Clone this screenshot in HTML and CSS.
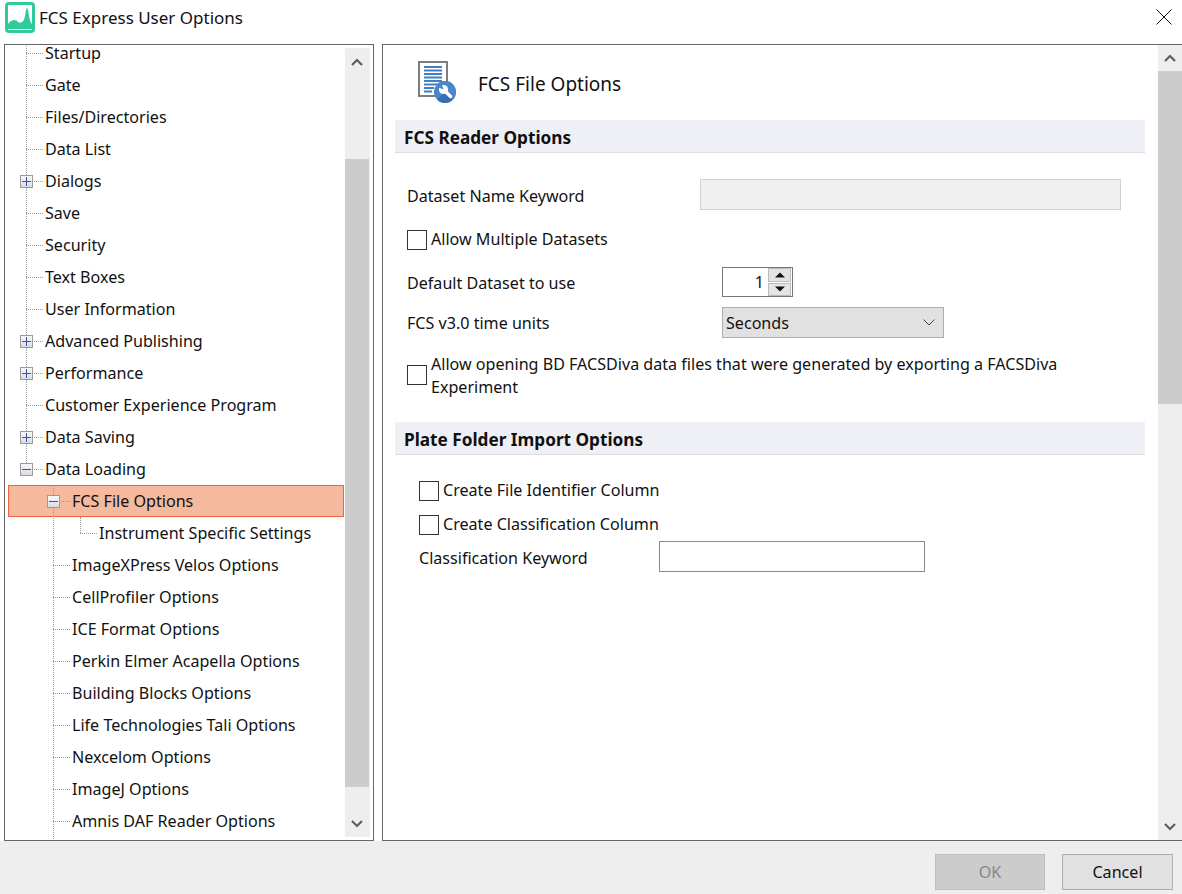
FILE: index.html
```html
<!DOCTYPE html>
<html lang="en">
<head>
<meta charset="utf-8">
<title>FCS Express User Options</title>
<link rel="stylesheet" href="styles.css">
</head>
<body>
<div class="window">
  <header class="titlebar">
    <svg class="app-icon" viewBox="0 0 30 31" width="30" height="31" aria-hidden="true">
      <rect x="1.5" y="1.5" width="27" height="28" rx="2.5" fill="#fff" stroke="#2fcb9b" stroke-width="3"/>
      <path d="M3 27V22Q6 18 9 18Q12 18 13 20Q15 21 17 20Q19 19 20 14Q21 6 22 6Q23 6 24 14Q25 20 27 22V27Z" fill="#2fcb9b"/>
    </svg>
    <span class="title-text">FCS Express User Options</span>
    <svg class="close-icon" viewBox="0 0 16 16" width="16" height="16" aria-hidden="true">
      <path d="M.5.5L15.5 15.5M15.5.5L.5 15.5" stroke="#111" stroke-width="1" fill="none"/>
    </svg>
  </header>

  <main class="panes">
    <nav class="tree-pane">
      <div class="tree">
        <span class="vline vline-0"></span>
        <span class="vline vline-1"></span>
        <span class="vline vline-2"></span>
        <div class="row l0">Startup</div>
        <div class="row l0">Gate</div>
        <div class="row l0">Files/Directories</div>
        <div class="row l0">Data List</div>
        <div class="row l0 has-box"><i class="box plus"></i>Dialogs</div>
        <div class="row l0">Save</div>
        <div class="row l0">Security</div>
        <div class="row l0">Text Boxes</div>
        <div class="row l0">User Information</div>
        <div class="row l0 has-box"><i class="box plus"></i>Advanced Publishing</div>
        <div class="row l0 has-box"><i class="box plus"></i>Performance</div>
        <div class="row l0">Customer Experience Program</div>
        <div class="row l0 has-box"><i class="box plus"></i>Data Saving</div>
        <div class="row l0 has-box"><i class="box"></i>Data Loading</div>
        <div class="row l1 has-box selected"><i class="box"></i>FCS File Options</div>
        <div class="row l2">Instrument Specific Settings</div>
        <div class="row l1">ImageXPress Velos Options</div>
        <div class="row l1">CellProfiler Options</div>
        <div class="row l1">ICE Format Options</div>
        <div class="row l1">Perkin Elmer Acapella Options</div>
        <div class="row l1">Building Blocks Options</div>
        <div class="row l1">Life Technologies Tali Options</div>
        <div class="row l1">Nexcelom Options</div>
        <div class="row l1">ImageJ Options</div>
        <div class="row l1">Amnis DAF Reader Options</div>
      </div>
      <div class="scrollbar left-scroll">
        <div class="sb-btn">
          <svg viewBox="0 0 12 8" width="12" height="8" aria-hidden="true"><path d="M1 7L6 2L11 7" fill="none" stroke="#5f5f5f" stroke-width="2.2"/></svg>
        </div>
        <div class="sb-thumb"></div>
        <div class="sb-btn">
          <svg viewBox="0 0 12 8" width="12" height="8" aria-hidden="true"><path d="M1 1L6 6L11 1" fill="none" stroke="#5f5f5f" stroke-width="2.2"/></svg>
        </div>
      </div>
    </nav>

    <section class="content-pane">
      <div class="content">
        <div class="page-head">
          <svg class="page-icon" viewBox="0 0 38 42" width="38" height="42" aria-hidden="true">
            <rect x="1" y="1" width="28" height="34" fill="#fff" stroke="#7d7d7d" stroke-width="2"/>
            <path d="M6 6H24M6 9.500H24M6 13H24M6 16.500H24M6 20H24M6 23.500H22M6 27H16M6 30.500H14" stroke="#3f7fc6" stroke-width="2"/>
            <circle cx="27" cy="31" r="11" fill="#4a86c8"/>
            <path d="M19.200 23.200A11 11 0 0 1 34.800 38.800Z" fill="#4a86c8"/>
            <path d="M19.200 38.800A11 11 0 0 0 34.800 38.800L27 31Z" fill="#346fb3"/>
            <path d="M26 29L32.500 35.500" stroke="#fff" stroke-width="3.400" stroke-linecap="round"/>
            <circle cx="25.500" cy="28.500" r="4.600" fill="#fff"/>
            <path d="M25.500 28.500L20.500 26.500L23.500 22.500Z" fill="#4a86c8"/>
          </svg>
          <h1>FCS File Options</h1>
        </div>

        <h2 class="band">FCS Reader Options</h2>
        <div class="reader-group">
          <div class="form-row dataset-name">
            <label class="field-label">Dataset Name Keyword</label>
            <div class="text-input disabled wide"></div>
          </div>
          <label class="check-row allow-multi"><i class="check"></i><span>Allow Multiple Datasets</span></label>
          <div class="form-row dataset-default">
            <label class="field-label">Default Dataset to use</label>
            <div class="spinner">
              <span class="spin-val">1</span>
              <span class="spin-btns">
                <span class="spin-btn"><svg viewBox="0 0 10 6" width="10" height="6" aria-hidden="true"><path d="M0 5.500L5 .5L10 5.500Z" fill="#111"/></svg></span>
                <span class="spin-btn"><svg viewBox="0 0 10 6" width="10" height="6" aria-hidden="true"><path d="M0 .5L5 5.500L10 .5Z" fill="#111"/></svg></span>
              </span>
            </div>
          </div>
          <div class="form-row units">
            <label class="field-label">FCS v3.0 time units</label>
            <div class="select"><span>Seconds</span>
              <svg viewBox="0 0 12 7" width="12" height="7" aria-hidden="true"><path d="M.5 .5L6 6L11.500 .5" fill="none" stroke="#444" stroke-width="1"/></svg>
            </div>
          </div>
          <label class="check-row diva"><i class="check"></i><span>Allow opening BD FACSDiva data files that were generated by exporting a FACSDiva Experiment</span></label>
        </div>

        <h2 class="band">Plate Folder Import Options</h2>
        <div class="plate-group">
          <label class="check-row"><i class="check"></i><span>Create File Identifier Column</span></label>
          <label class="check-row"><i class="check"></i><span>Create Classification Column</span></label>
          <div class="form-row keyword">
            <label class="field-label short">Classification Keyword</label>
            <div class="text-input key-input"></div>
          </div>
        </div>
      </div>
      <div class="scrollbar right-scroll">
        <div class="sb-btn">
          <svg viewBox="0 0 12 8" width="12" height="8" aria-hidden="true"><path d="M1 7L6 2L11 7" fill="none" stroke="#5f5f5f" stroke-width="2.2"/></svg>
        </div>
        <div class="sb-thumb"></div>
        <div class="sb-rest"></div>
        <div class="sb-btn">
          <svg viewBox="0 0 12 8" width="12" height="8" aria-hidden="true"><path d="M1 1L6 6L11 1" fill="none" stroke="#5f5f5f" stroke-width="2.2"/></svg>
        </div>
      </div>
    </section>
  </main>

  <footer class="footer">
    <button class="btn ok" disabled>OK</button>
    <button class="btn cancel">Cancel</button>
  </footer>
</div>
</body>
</html>
```
FILE: styles.css
```css
* { box-sizing: border-box; }
html, body { margin: 0; padding: 0; }
body {
  width: 1182px;
  height: 894px;
  overflow: hidden;
  background: #fff;
  color: #111;
  font-family: "Noto Sans", "Open Sans", sans-serif;
  font-size: 16.1px;
}
.window { display: flex; flex-direction: column; height: 894px; }

.titlebar {
  flex: 0 0 44px;
  display: flex;
  align-items: flex-start;
  padding: 2px 10px 0 5px;
  background: #fff;
}
.app-icon { flex: none; margin-right: 4px; }
.title-text { font-size: 17px; flex: 1; line-height: 32px; }
.close-icon { flex: none; margin-top: 7px; }

.panes { flex: 0 0 797px; display: flex; padding-left: 4px; gap: 8px; }

.tree-pane {
  width: 370px;
  border: 1px solid #666;
  display: flex;
  position: relative;
  overflow: hidden;
  background: #fff;
}
.tree {
  position: relative;
  flex: 0 0 340px;
  margin-top: -8px;
  overflow: visible;
}
.row {
  height: 32px;
  display: flex;
  align-items: center;
  position: relative;
  white-space: nowrap;
}
.row::before {
  content: "";
  position: absolute;
  top: 16px;
  height: 0;
  border-top: 1px dotted #999;
}
.l0 { padding-left: 40px; }
.l0::before { left: 21px; width: 17px; }
.l1 { padding-left: 67px; }
.l1::before { left: 48px; width: 17px; }
.l2 { padding-left: 94px; }
.l2::before { left: 75px; width: 17px; }

.selected {
  background: #f5b99d;
  box-shadow: inset 0 0 0 1px #f0623a;
  margin-left: 3px;
  padding-left: 64px;
  margin-right: 1px;
}
.selected::before { left: 45px; }

.box {
  position: absolute;
  top: 10px;
  left: 15px;
  width: 13px;
  height: 13px;
  border: 1px solid #9a9a9a;
  background: linear-gradient(#fafafa, #d9dbe2);
  z-index: 2;
}
.selected .box { left: 39px; }
.box::before {
  content: "";
  position: absolute;
  left: 1px;
  right: 1px;
  top: 5px;
  height: 1px;
  background: #2f5a9e;
}
.box.plus::after {
  content: "";
  position: absolute;
  top: 1px;
  bottom: 1px;
  left: 5px;
  width: 1px;
  background: #2f5a9e;
}

.vline { position: absolute; width: 0; border-left: 1px dotted #999; z-index: 1; }
.vline-0 { left: 21px; top: 0; height: 432px; }
.vline-1 { left: 48px; top: 448px; height: 370px; }
.vline-2 { left: 75px; top: 480px; height: 16px; }

.scrollbar {
  display: flex;
  flex-direction: column;
  background: #eee;
}
.left-scroll {
  flex: 0 0 25px;
  margin: 3px 3px 3px 0;
}
.sb-btn {
  flex: 0 0 26px;
  display: flex;
  align-items: center;
  justify-content: center;
}
.left-scroll .sb-btn:first-child { flex-basis: 111px; align-items: flex-start; padding-top: 10px; padding-right: 1px; }
.left-scroll .sb-btn:last-child { flex-basis: 50px; align-items: flex-end; padding-bottom: 9px; padding-right: 1px; }
.left-scroll .sb-thumb { flex: 1; background: #ccc; margin-right: 1px; }

.content-pane {
  width: 800px;
  border-top: 1px solid #666;
  border-left: 1px solid #666;
  border-bottom: 1px solid #666;
  display: flex;
  background: #fff;
}
.content { flex: 0 0 775px; padding-left: 12px; }
.right-scroll { flex: 0 0 24px; }
.right-scroll .sb-thumb { flex: 0 0 333px; background: #ccc; }
.right-scroll .sb-rest { flex: 1; }

.page-head {
  height: 75px;
  display: flex;
  align-items: flex-start;
  padding-left: 23px;
}
.page-icon { margin-top: 16px; flex: none; }
.page-head h1 {
  margin: 23px 0 0 22px;
  font-size: 19px;
  font-weight: 400;
  line-height: 32px;
}
.band {
  margin: 0;
  width: 750px;
  height: 33px;
  padding: 2px 0 0 9px;
  display: flex;
  align-items: center;
  background: #eef0f5;
  border-bottom: 1px solid #ddd;
  font-size: 17.2px;
  font-weight: 700;
}

.reader-group { height: 269px; padding: 26px 0 0 12px; display: flex; flex-direction: column; }
.form-row { display: flex; align-items: center; }
.field-label { flex: 0 0 293px; }
.field-label.short { flex-basis: 240px; padding-top: 2px; }
.dataset-name { height: 31px; margin-bottom: 18px; }
.dataset-name .field-label { padding-top: 2px; }
.allow-multi { margin-bottom: 16px; }
.dataset-default { height: 30px; margin-bottom: 10px; }
.dataset-default .field-label { padding-top: 2px; }
.dataset-default .field-label, .units .field-label { flex-basis: 315px; }
.units { height: 31px; margin-bottom: 13px; }

.text-input { background: #fff; border: 1px solid #8a8a8a; height: 31px; }
.text-input.disabled { background: #f0f0f0; border-color: #d0d0d0; }
.wide { width: 421px; }
.key-input { width: 266px; }

.check-row { display: flex; align-items: center; gap: 4px; min-height: 20px; line-height: 23px; }
.check { flex: none; width: 20px; height: 20px; border: 1px solid #333; background: #fff; }
.diva { width: 680px; }
.diva span { padding-top: 2px; }

.spinner {
  width: 71px;
  height: 30px;
  border: 1px solid #777;
  display: flex;
  align-items: center;
  background: #fff;
}
.spin-val { flex: 1; text-align: right; padding-right: 4px; }
.spin-btns { flex: 0 0 24px; height: 28px; display: flex; flex-direction: column; gap: 1px; padding-right: 1px; }
.spin-btn {
  flex: 1;
  display: flex;
  align-items: center;
  justify-content: center;
  background: #e4e4e4;
  border: 1px solid #bbb;
}
.select {
  width: 222px;
  height: 31px;
  border: 1px solid #adadad;
  background: #e1e1e1;
  display: flex;
  align-items: center;
  justify-content: space-between;
  padding: 0 8px 0 3px;
}

.plate-group { padding: 24px 0 0 24px; display: flex; flex-direction: column; gap: 11px; }
.keyword { margin-top: -6px; height: 31px; }

.footer {
  flex: 1;
  background: #eee;
  display: flex;
  justify-content: flex-end;
  align-items: flex-start;
  padding: 13px 9px 0 0;
  gap: 17px;
}
.btn {
  height: 36px;
  font: inherit;
  border: 1px solid #adadad;
  background: #e1e1e1;
  color: #111;
  padding: 0;
}
.ok { width: 110px; background: #ccc; border-color: #bfbfbf; color: #888; }
.cancel { width: 111px; }
```
